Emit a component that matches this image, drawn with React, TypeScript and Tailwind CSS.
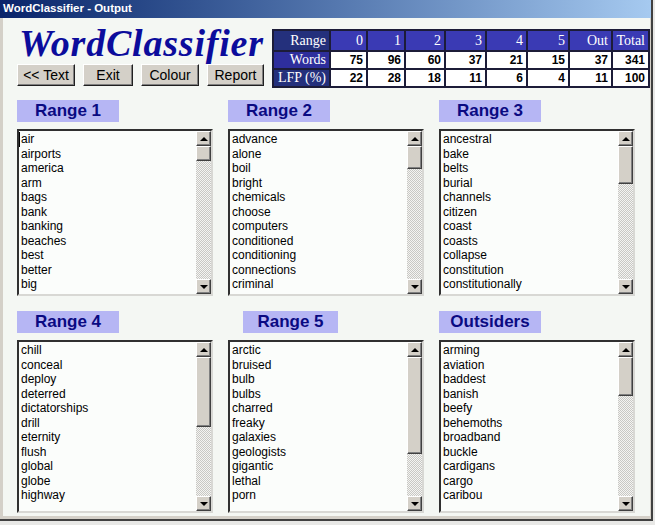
import { FC } from 'react';

type WordList = {
  title: string;
  count: number;
  words: string[];
  offset?: boolean; // header box sits a little to the right
};

const topLists: WordList[] = [
  {
    title: 'Range 1',
    count: 96,
    words: ['air', 'airports', 'america', 'arm', 'bags', 'bank', 'banking', 'beaches', 'best', 'better', 'big'],
  },
  {
    title: 'Range 2',
    count: 60,
    words: ['advance', 'alone', 'boil', 'bright', 'chemicals', 'choose', 'computers', 'conditioned', 'conditioning', 'connections', 'criminal'],
  },
  {
    title: 'Range 3',
    count: 37,
    words: ['ancestral', 'bake', 'belts', 'burial', 'channels', 'citizen', 'coast', 'coasts', 'collapse', 'constitution', 'constitutionally'],
  },
];

const bottomLists: WordList[] = [
  {
    title: 'Range 4',
    count: 21,
    words: ['chill', 'conceal', 'deploy', 'deterred', 'dictatorships', 'drill', 'eternity', 'flush', 'global', 'globe', 'highway'],
  },
  {
    title: 'Range 5',
    count: 15,
    offset: true,
    words: ['arctic', 'bruised', 'bulb', 'bulbs', 'charred', 'freaky', 'galaxies', 'geologists', 'gigantic', 'lethal', 'porn'],
  },
  {
    title: 'Outsiders',
    count: 37,
    words: ['arming', 'aviation', 'baddest', 'banish', 'beefy', 'behemoths', 'broadband', 'buckle', 'cardigans', 'cargo', 'caribou'],
  },
];

const columns = ['0', '1', '2', '3', '4', '5', 'Out', 'Total'];
const wordCounts = [75, 96, 60, 37, 21, 15, 37, 341];
const lfp = [22, 28, 18, 11, 6, 4, 11, 100];

const ui = "font-['Liberation_Sans',Arial,sans-serif]";
const serif = "font-['Liberation_Serif','Times_New_Roman',serif]";

const ArrowButton: FC<{ down?: boolean }> = ({ down }) => (
  <div className="h-[15px] w-full flex items-center justify-center bg-[#d4d0c8] border border-t-white border-l-white border-r-[#404040] border-b-[#404040] shadow-[inset_-1px_-1px_0_#808080]">
    {down ? (
      <div className="w-0 h-0 border-x-[4px] border-x-transparent border-t-[4px] border-t-black" />
    ) : (
      <div className="w-0 h-0 border-x-[4px] border-x-transparent border-b-[4px] border-b-black" />
    )}
  </div>
);

const ListBox: FC<{ list: WordList; height: number; focused?: boolean }> = ({ list, height, focused }) => {
  // thumb size follows how much of the list is on screen
  const track = height - 4 - 30;
  const thumb = Math.max(12, Math.round((track * 10.5) / list.count));

  return (
    <div
      className="flex w-[196px] bg-[#fbfdfb] border-2 border-t-[#303030] border-l-[#303030] border-r-[#d8d8d4] border-b-[#d8d8d4]"
      style={{ height }}
    >
      <div className={`flex-1 pl-[1px] pt-[1px] text-[12px] leading-[14.5px] text-black ${ui}`}>
        {list.words.map((w, i) => (
          <div key={w} className={focused && i === 0 ? 'border-l border-black pl-[1px] -ml-[1px]' : 'pl-[1px]'}>
            {w}
          </div>
        ))}
      </div>
      <div className="w-[15px] flex flex-col">
        <ArrowButton />
        <div className="flex-1 bg-[repeating-conic-gradient(#c8c8c4_0_25%,#f4f4f2_0_50%)] bg-[length:2px_2px]">
          <div
            className="bg-[#d4d0c8] border border-t-white border-l-white border-r-[#404040] border-b-[#404040] shadow-[inset_-1px_-1px_0_#808080]"
            style={{ height: thumb }}
          />
        </div>
        <ArrowButton down />
      </div>
    </div>
  );
};

const Section: FC<{ list: WordList; height: number; focused?: boolean }> = ({ list, height, focused }) => (
  <div className="flex flex-col">
    <div
      className={`h-[22px] flex items-center justify-center bg-[#b6b6f4] text-[#0a0a82] text-[17px] font-bold ${ui} ${
        list.offset ? 'ml-[15px] w-[95px]' : 'w-[102px]'
      }`}
    >
      {list.title}
    </div>
    <div className="mt-[7px]">
      <ListBox list={list} height={height} focused={focused} />
    </div>
  </div>
);

const Button: FC<{ label: string; width: string }> = ({ label, width }) => (
  <button
    className={`${width} h-[22px] bg-[#d4d0c8] text-[14px] text-black ${ui} border border-t-white border-l-white border-r-[#202020] border-b-[#202020] shadow-[inset_-1px_-1px_0_#808080]`}
  >
    {label}
  </button>
);

const StatsTable: FC = () => (
  <div className="grid grid-cols-[55px_35px_36px_38px_39px_39px_40px_41px_35px] grid-rows-[19px_16px_16px] gap-[2px] p-[2px] bg-[#1c1c38]">
    <div className={`bg-[#24307c] text-white text-[14px] leading-[19px] text-right pr-[3px] ${serif}`}>Range</div>
    {columns.map((c) => (
      <div key={c} className={`bg-[#3a3ab4] text-white text-[14px] leading-[19px] text-right pr-[3px] ${serif}`}>
        {c}
      </div>
    ))}
    <div className={`bg-[#2e2e9c] text-white text-[14px] leading-[16px] text-right pr-[3px] ${serif}`}>Words</div>
    {wordCounts.map((n, i) => (
      <div key={i} className={`bg-white text-black text-[12px] font-bold leading-[16px] text-right pr-[3px] ${ui}`}>
        {n}
      </div>
    ))}
    <div className={`bg-[#24307c] text-white text-[14px] leading-[16px] text-right pr-[3px] ${serif}`}>LFP (%)</div>
    {lfp.map((n, i) => (
      <div key={i} className={`bg-white text-black text-[12px] font-bold leading-[16px] text-right pr-[3px] ${ui}`}>
        {n}
      </div>
    ))}
  </div>
);

const App: FC = () => {
  return (
    <div className="w-[655px] h-[525px] bg-[#e8e8e6] overflow-hidden">
      <div className="w-[653px] h-[521px] flex flex-col bg-[#d4d0c8] border-r-2 border-b-2 border-[#404040]">
        {/* title bar */}
        <div className="h-[18px] w-[651px] flex items-center pl-[3px] bg-gradient-to-r from-[#0a246a] to-[#a6caf0]">
          <span className={`text-white text-[11.5px] font-bold ${ui}`}>WordClassifier - Output</span>
        </div>

        <div className="flex-1 ml-[3px] mr-[1px] mb-[3px] bg-[#f4f7f3] flex flex-col">
          <div className="flex justify-between h-[82px]">
            <div className="pl-[14px] flex flex-col">
              <div
                className={`h-[46px] leading-[50px] text-[38px] tracking-[0.8px] italic font-bold text-[#0c0c9c] pl-[2px] ${serif}`}
              >
                WordClassifier
              </div>
              <div className="flex gap-[8px]">
                <Button label="<< Text" width="w-[58px]" />
                <Button label="Exit" width="w-[50px]" />
                <Button label="Colour" width="w-[58px]" />
                <Button label="Report" width="w-[57px]" />
              </div>
            </div>
            <div className="pt-[11px]">
              <StatsTable />
            </div>
          </div>

          <div className="pl-[14px] grid grid-cols-[196px_196px_196px] gap-x-[15px] gap-y-[15px]">
            {topLists.map((l, i) => (
              <Section key={l.title} list={l} height={167} focused={i === 0} />
            ))}
            {bottomLists.map((l) => (
              <Section key={l.title} list={l} height={173} />
            ))}
          </div>
        </div>
      </div>
    </div>
  );
};

export default App;
